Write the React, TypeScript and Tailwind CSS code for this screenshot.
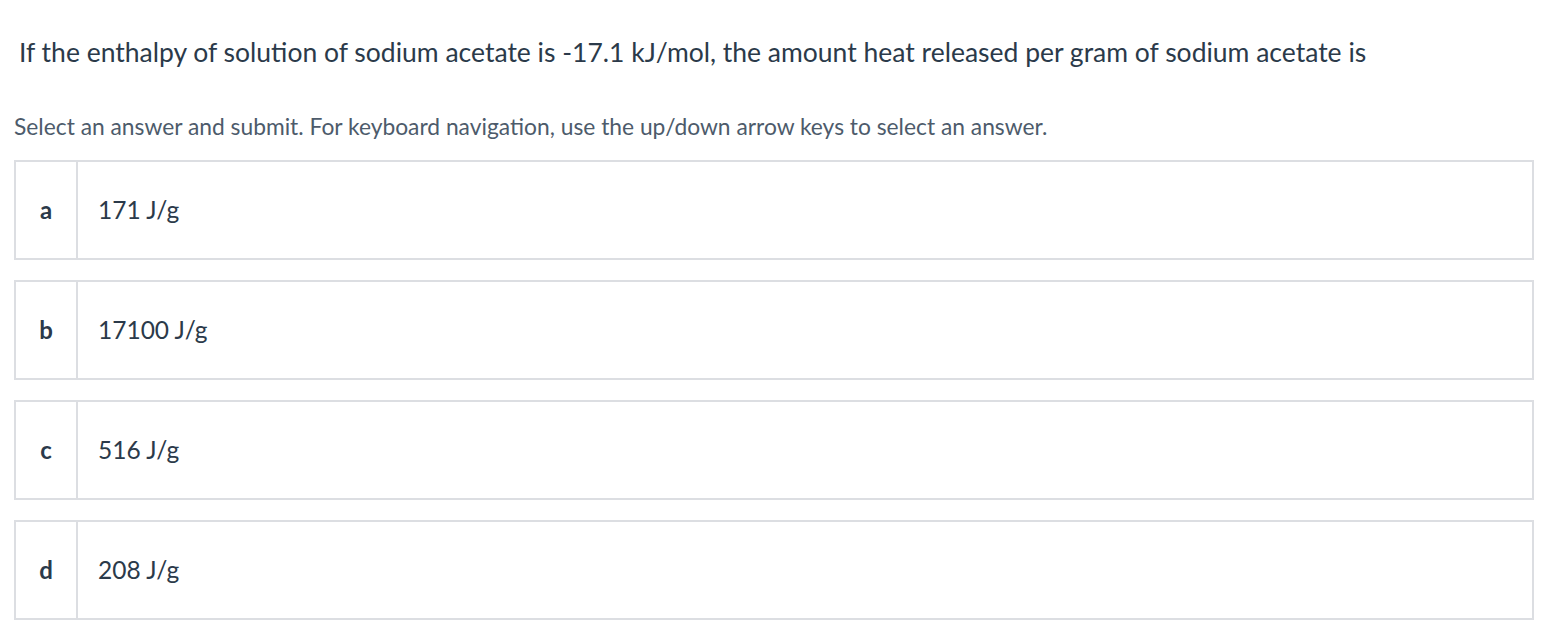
import React from "react";

const options = [
  { key: "a", text: "171 J/g" },
  { key: "b", text: "17100 J/g" },
  { key: "c", text: "516 J/g" },
  { key: "d", text: "208 J/g" },
];

export default function App() {
  return (
    <div
      className="w-[1546px] h-[634px] bg-white overflow-hidden"
      style={{ fontFamily: "Lato, 'Noto Sans', sans-serif" }}
    >
      <div className="pl-[19px] pt-[36px] text-[26.5px] leading-[32px] text-[#2b3a4a] whitespace-nowrap">
        If the enthalpy of solution of sodium acetate is -17.1 kJ/mol, the amount heat released per gram of sodium acetate is
      </div>
      <div className="pl-[14px] pt-[46px] text-[22.8px] leading-[24px] text-[#4d5b6b] whitespace-nowrap">
        Select an answer and submit. For keyboard navigation, use the up/down arrow keys to select an answer.
      </div>
      <div className="flex flex-col gap-[20px] pl-[14px] pr-[12px] pt-[22px]">
        {options.map((o) => (
          <div
            key={o.key}
            className="flex h-[100px] border-2 border-[#dcdee2] bg-white"
          >
            <div className="w-[62px] flex items-center justify-center border-r-2 border-[#dcdee2] text-[24px] font-bold text-[#2b3a4a]">
              {o.key}
            </div>
            <div className="flex items-center pl-[20px] text-[24.5px] text-[#2b3a4a]">
              {o.text}
            </div>
          </div>
        ))}
      </div>
    </div>
  );
}
